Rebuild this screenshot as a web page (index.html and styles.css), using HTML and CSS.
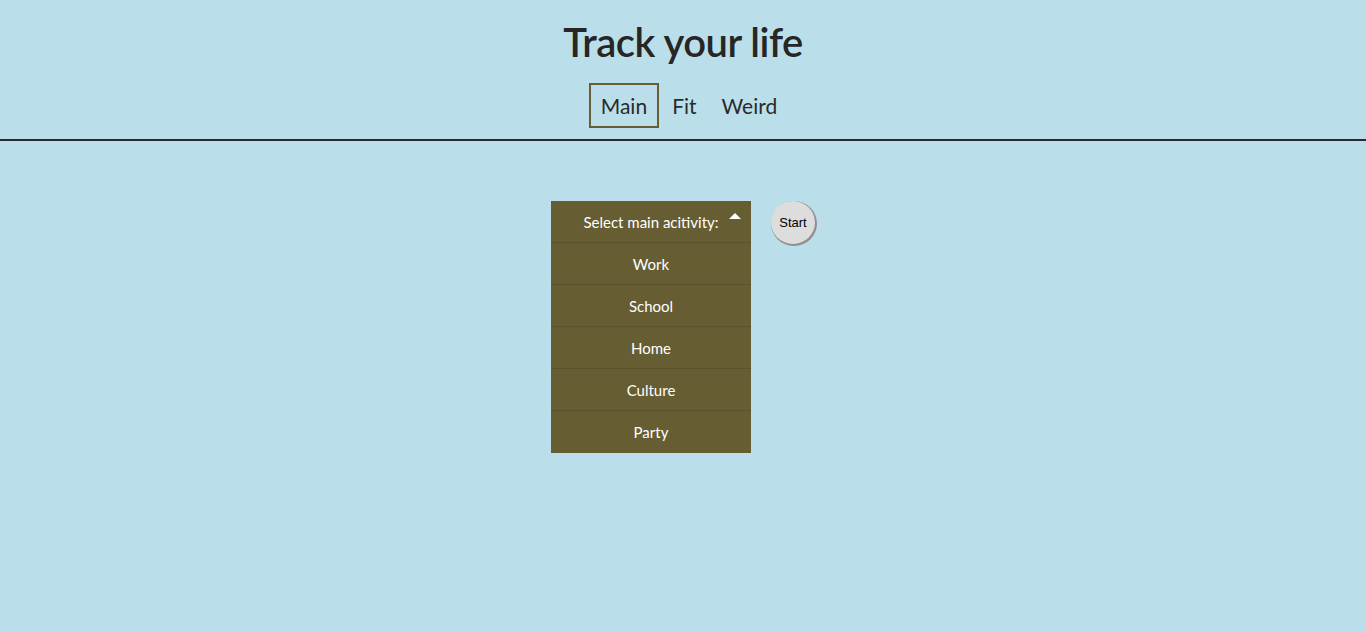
FILE: index.html
```html
<!DOCTYPE html>
<html lang="en">
<head>
<meta charset="utf-8">
<title>Track your life</title>
<link rel="stylesheet" href="styles.css">
</head>
<body>
<header class="header">
  <h1 class="title">Track your life</h1>
  <nav class="nav">
    <a class="nav-item active" href="#">Main</a>
    <a class="nav-item" href="#">Fit</a>
    <a class="nav-item" href="#">Weird</a>
  </nav>
</header>
<main class="main">
  <div class="dropdown">
    <div class="dd-head">Select main acitivity:<span class="caret"></span></div>
    <div class="dd-item">Work</div>
    <div class="dd-item">School</div>
    <div class="dd-item">Home</div>
    <div class="dd-item">Culture</div>
    <div class="dd-item">Party</div>
  </div>
  <button class="start">Start</button>
</main>
</body>
</html>
```

FILE: styles.css
```css
html, body {
  margin: 0;
  padding: 0;
  background: #bbdfea;
  font-family: Lato, "Open Sans", sans-serif;
  color: #262626;
  height: 100%;
}
.header {
  display: flex;
  flex-direction: column;
  align-items: center;
  border-bottom: 2px solid #2a2a2a;
  padding-top: 14px;
  padding-bottom: 11px;
}
.title {
  margin: 0;
  font-size: 40px;
  font-weight: 600;
  line-height: 56px;
  letter-spacing: -0.5px;
}
.nav {
  display: flex;
  gap: 1px;
  margin-top: 13px;
  margin-left: 12px;
}
.nav-item {
  display: block;
  padding: 7px 10px;
  font-size: 21px;
  line-height: 27px;
  color: #2a2a2a;
  text-decoration: none;
  border: 2px solid transparent;
}
.nav-item.active {
  border-color: #665d33;
}
.main {
  display: flex;
  justify-content: center;
  align-items: flex-start;
  gap: 20px;
  padding-top: 60px;
}
.dropdown {
  width: 200px;
  background: #665d33;
  color: #fff;
  font-size: 15px;
}
.dd-head, .dd-item {
  height: 42px;
  display: flex;
  align-items: center;
  justify-content: center;
  border-bottom: 1px solid #5a522c;
  box-sizing: border-box;
}
.dd-item:last-child {
  border-bottom: none;
}
.dd-head {
  position: relative;
}
.caret {
  position: absolute;
  right: 10px;
  top: 12px;
  width: 0;
  height: 0;
  border-left: 6px solid transparent;
  border-right: 6px solid transparent;
  border-bottom: 6px solid #fff;
}
.start {
  width: 44px;
  height: 43px;
  border-radius: 50%;
  border: none;
  background: #dddddd;
  box-shadow: 1px 1px 0 1px #8f8f8f;
  font-family: "Liberation Sans", Arial, sans-serif;
  font-size: 13px;
  color: #000;
  padding: 0;
}
```
